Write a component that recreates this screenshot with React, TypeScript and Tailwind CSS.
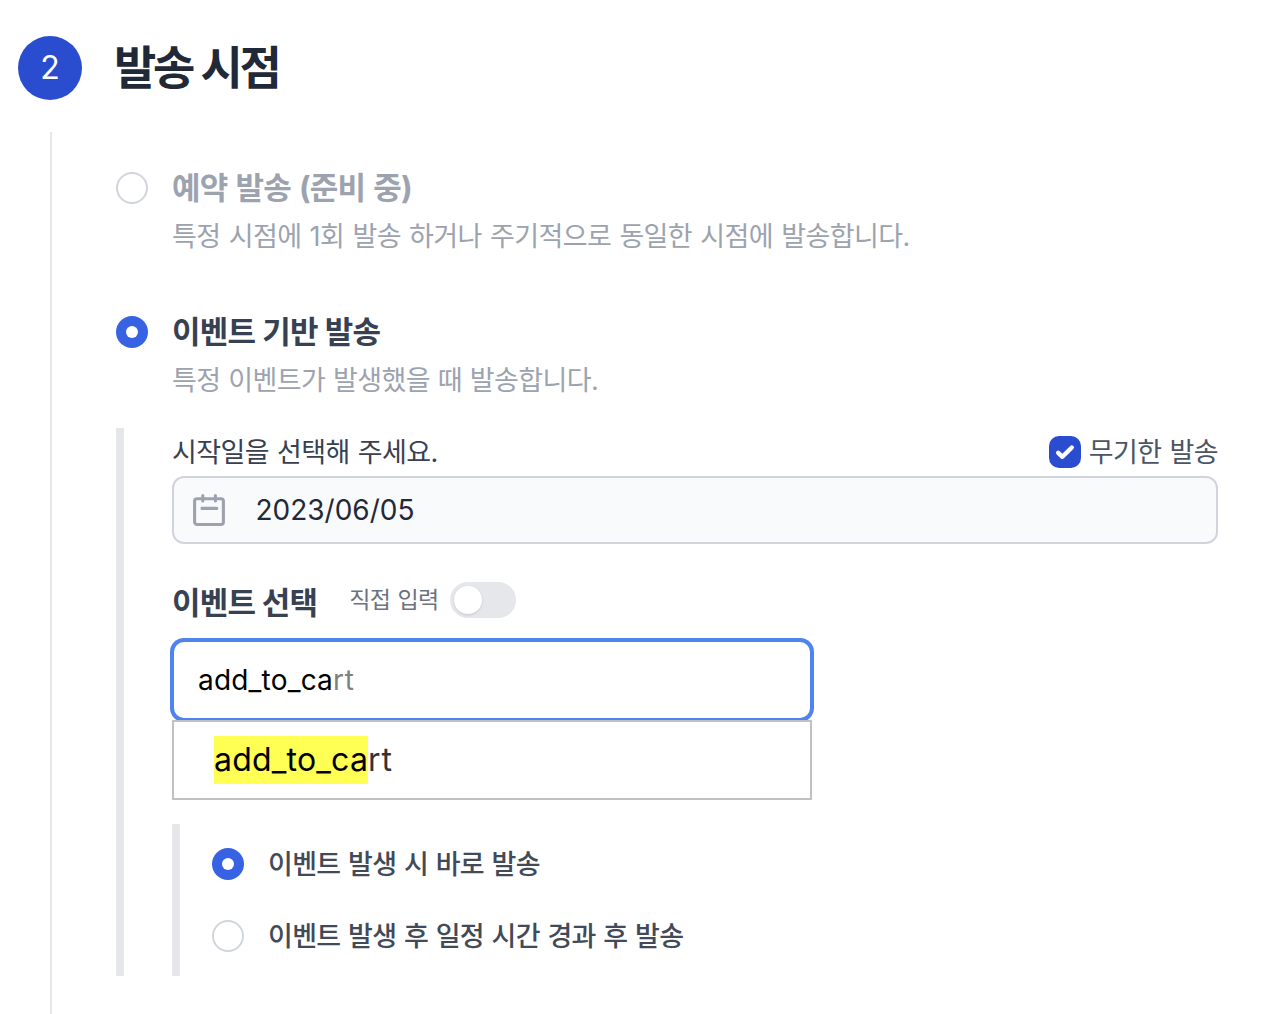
import React from "react";

function Radio({ checked = false }: { checked?: boolean }) {
  return checked ? (
    <span className="flex size-8 shrink-0 items-center justify-center rounded-full bg-[#3762e3]">
      <span className="size-3 rounded-full bg-white" />
    </span>
  ) : (
    <span className="block size-8 shrink-0 rounded-full border-2 border-gray-300 bg-white" />
  );
}

function CalendarIcon() {
  return (
    <svg className="size-9 shrink-0 text-[#9ca3af]" viewBox="0 0 36 36" fill="none" stroke="currentColor" strokeWidth="3.1" strokeLinecap="round" strokeLinejoin="round">
      <rect x="3.6" y="6.7" width="28.8" height="25.8" rx="2.5" />
      <path d="M11.8 3.6v5.4M24.4 3.6v5.4M11 16.4h14.8" />
    </svg>
  );
}

const body = "text-[27px] leading-10 tracking-[-0.6px] [word-spacing:1px] whitespace-nowrap";
const option = "pt-0.5 text-[27px] leading-[38px] font-medium tracking-[-0.7px] [word-spacing:1.1px] whitespace-nowrap text-[#414a58]";
const heading = "text-[31px] leading-12 font-bold tracking-[-0.8px] whitespace-nowrap";

export default function App() {
  return (
    <main className="flex h-[1014px] w-[1274px] flex-col overflow-hidden bg-white pl-[18px] pt-9 font-['Inter','Noto_Sans_CJK_KR',sans-serif]">
      <header className="flex h-16 items-center">
        <span className="flex size-16 items-center justify-center rounded-full bg-[#2a4dd0] text-[32px] text-white">2</span>
        <h1 className="ml-8 pb-0.5 text-[46px] leading-[62px] font-bold tracking-[-3.3px] [word-spacing:0.8px] whitespace-nowrap text-[#1f2937]">발송 시점</h1>
      </header>

      <div className="mt-8 ml-8 flex h-[882px] border-l-2 border-[#e5e7eb] pl-16">
        <div className="flex w-[1102px] flex-col pt-8">
          <section className="flex h-36 gap-6">
            <div className="pt-2"><Radio /></div>
            <div className="text-[#9ca3af]">
              <h2 className={`[word-spacing:1.5px] ${heading}`}>예약 발송 (준비 중)</h2>
              <p className="mt-[5px] text-[27px] leading-10 tracking-[-0.6px] [word-spacing:1.2px] whitespace-nowrap">특정 시점에 1회 발송 하거나 주기적으로 동일한 시점에 발송합니다.</p>
            </div>
          </section>

          <section className="flex h-[120px] gap-6">
            <div className="pt-2"><Radio checked /></div>
            <div>
              <h2 className={`text-[#374151] [word-spacing:0.5px] ${heading}`}>이벤트 기반 발송</h2>
              <p className="mt-[5px] text-[27px] leading-10 tracking-[-0.6px] [word-spacing:0.8px] whitespace-nowrap text-[#9ca3af]">특정 이벤트가 발생했을 때 발송합니다.</p>
            </div>
          </section>

          <section className="h-[548px] border-l-8 border-[#e5e7eb] pl-12">
            <div className="flex h-12 items-center justify-between">
              <span className={`pt-0.5 text-[#374151] ${body}`}>시작일을 선택해 주세요.</span>
              <label className="flex items-center gap-2">
                <span className="flex size-8 items-center justify-center rounded-[10px] bg-[#2a4dd0]">
                  <svg className="size-8" viewBox="0 0 32 32" fill="none" stroke="white" strokeWidth="4.4" strokeLinecap="round" strokeLinejoin="round">
                    <path d="M9.2 16.8l4.2 4L22.8 11.5" />
                  </svg>
                </span>
                <span className={`pt-0.5 text-[#4b5563] ${body}`}>무기한 발송</span>
              </label>
            </div>

            <div className="flex h-[68px] items-center rounded-xl border-2 border-[#d1d5db] bg-[#f9fafb] pl-[17px]">
              <CalendarIcon />
              <span className="ml-[28.5px] text-[28px] text-[#1f2937]">2023/06/05</span>
            </div>

            <div className="flex h-24 items-start pt-[35px]">
              <h3 className={`text-[#374151] ${heading}`}>이벤트 선택</h3>
              <div className="ml-8 flex items-center pt-[3px]">
                <span className="-mt-px text-[23px] leading-9 tracking-[-0.5px] [word-spacing:1px] whitespace-nowrap text-[#6b7280]">직접 입력</span>
                <span className="ml-[11px] flex h-9 w-[66px] items-center rounded-full bg-[#e5e7eb] pl-1">
                  <span className="size-7 rounded-full bg-white shadow-sm" />
                </span>
              </div>
            </div>

            <div className="w-[640px]">
              <div className="flex h-20 items-center rounded-xl border-2 border-[#4f83ee] bg-white pl-6 text-[28px] tracking-[0.2px] text-black ring-2 ring-[#4f83ee]">
                <span>add_to_ca</span>
                <span className="tracking-[0.8px] text-[#808080]">rt</span>
              </div>
              <div className="relative flex h-20 items-center border-2 border-[#c0c0c0] bg-white pl-10 text-[32px] leading-12 tracking-[0.2px] text-[#333333]">
                <mark className="bg-[#ffff54] text-black">add_to_ca</mark>
                <span className="tracking-[1px]">rt</span>
              </div>
            </div>

            <div className="mt-6 flex h-[152px] flex-col gap-8 border-l-8 border-[#e5e7eb] pt-5 pl-8">
              <label className="flex items-center gap-6">
                <Radio checked />
                <span className={option}>이벤트 발생 시 바로 발송</span>
              </label>
              <label className="flex items-center gap-6">
                <Radio />
                <span className={option}>이벤트 발생 후 일정 시간 경과 후 발송</span>
              </label>
            </div>
          </section>
        </div>
      </div>
    </main>
  );
}
